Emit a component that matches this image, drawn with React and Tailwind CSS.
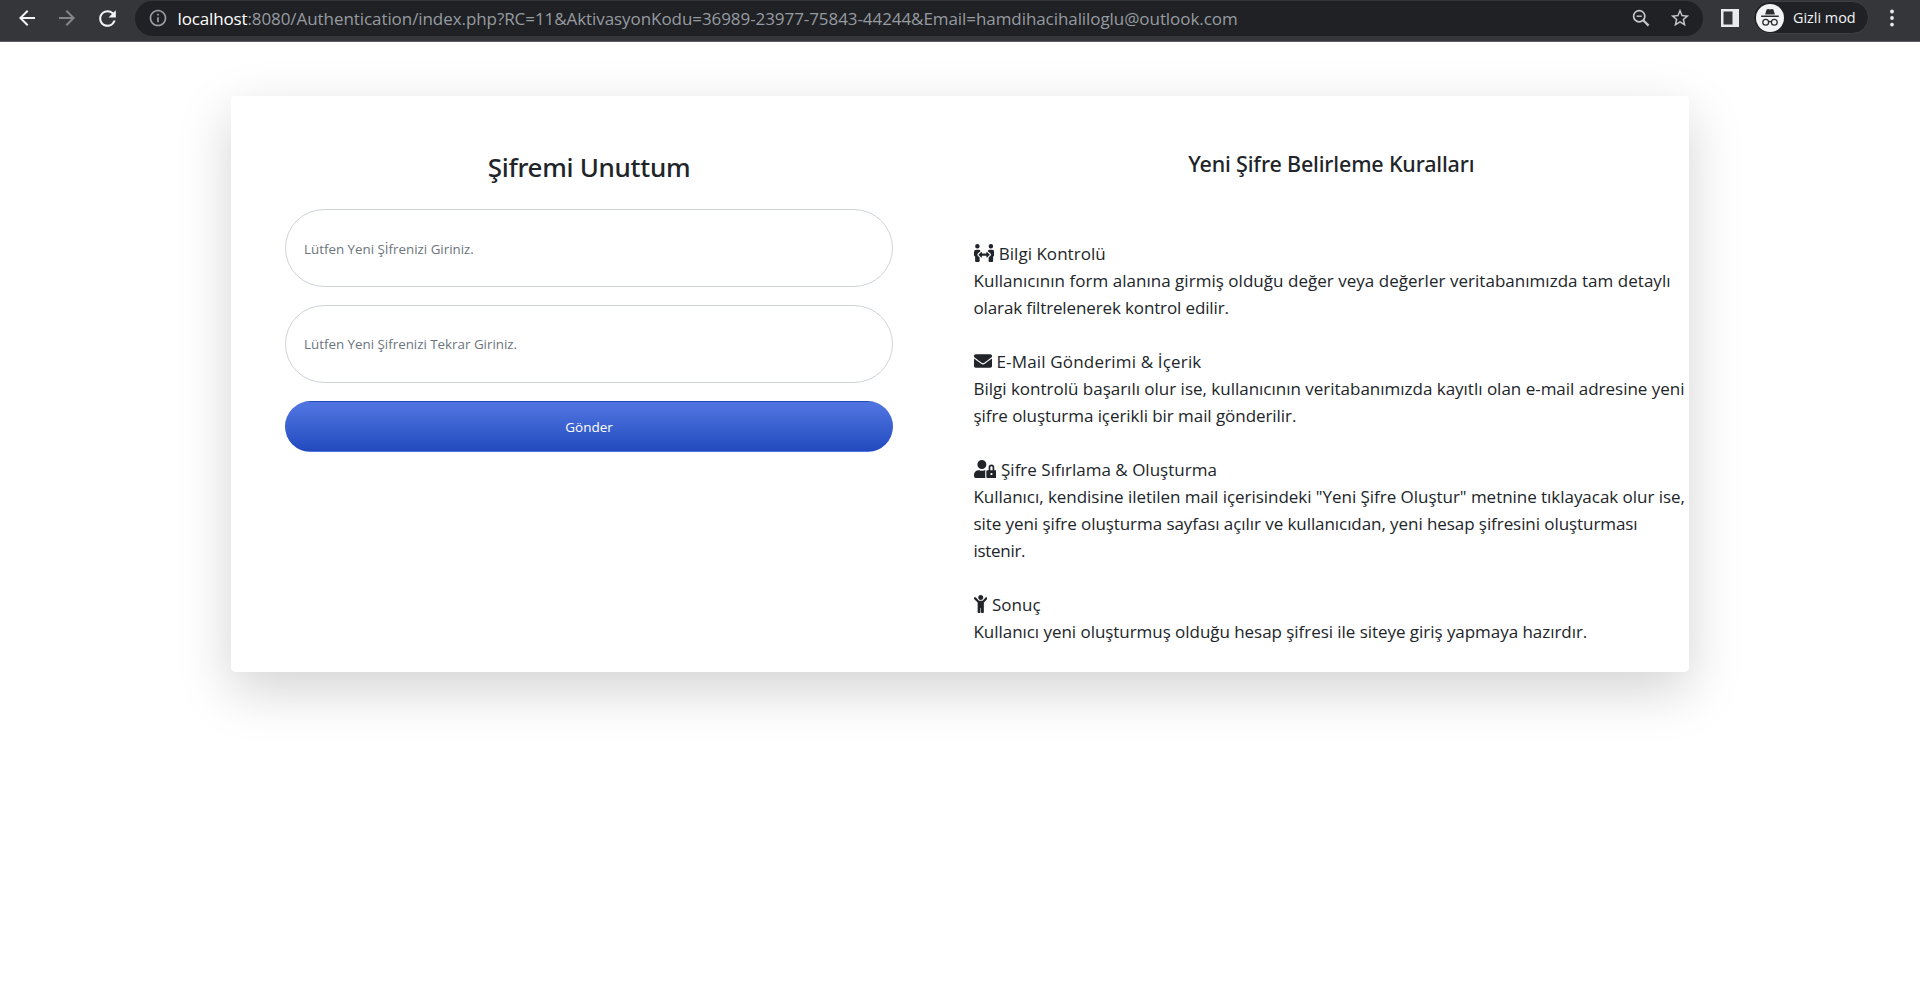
import React from "react";
import {
  MdArrowBack,
  MdArrowForward,
  MdRefresh,
  MdInfoOutline,
  MdStarBorder,
} from "react-icons/md";
import { FaPeopleArrows, FaEnvelope, FaUserLock, FaChild } from "react-icons/fa";

function IncognitoIcon() {
  return (
    <svg className="h-7 w-7 shrink-0" viewBox="0 0 28 28">
      <circle cx="14" cy="14" r="14" fill="#f1f3f4" />
      <path
        d="M10.6 5.4 12.2 5l1.8.5 1.8-.5 1.6.4 1.5 5.2H9.1zM5.2 11.6h17.6v1.3H5.2z"
        fill="#2b2c30"
      />
      <g fill="none" stroke="#2b2c30" strokeWidth="1.3">
        <circle cx="9.7" cy="18.3" r="2.9" />
        <circle cx="18.3" cy="18.3" r="2.9" />
        <path d="M12.6 17.9q1.4-.9 2.8 0" />
      </g>
    </svg>
  );
}

function ZoomOutIcon() {
  return (
    <svg
      className="mt-[8px] mr-[19px] h-[18px] w-[18px] shrink-0 text-[#c4c7cb]"
      viewBox="0 0 18 18"
      fill="none"
      stroke="currentColor"
    >
      <circle cx="7.2" cy="7.2" r="5.6" strokeWidth="1.7" />
      <path d="m11.2 11.2 5.4 5.4" strokeWidth="2.2" />
      <path d="M4.6 7.2h5.2" strokeWidth="1.4" />
    </svg>
  );
}

function BrowserBar() {
  return (
    <header className="flex h-[42px] w-full items-start border-b border-[#5b5d61] bg-[#35363a] pt-px text-[#e8eaed]">
      <div className="flex w-[135px] gap-4 pt-[5px] pl-[15px]">
        <MdArrowBack className="h-6 w-6 text-[#f1f3f4]" />
        <MdArrowForward className="h-6 w-6 text-[#85868a]" />
        <MdRefresh className="h-[25px] w-[25px] text-[#f1f3f4]" />
      </div>
      <div className="flex h-[35px] w-[1568px] items-start rounded-full bg-[#202124] pl-[13px]">
        <MdInfoOutline className="mt-[7px] h-5 w-5 shrink-0 text-[#9aa0a6]" />
        <div className="ml-[9.5px] flex-1 font-['Open_Sans',sans-serif] text-[17px] leading-[35px] tracking-[-0.07px] whitespace-nowrap text-[#969ba1]">
          <span className="tracking-[-0.15px] text-white">localhost</span>
          :8080/Authentication/index.php?RC=11&amp;AktivasyonKodu=36989-23977-75843-44244&amp;Email=hamdihacihaliloglu@outlook.com
        </div>
        <ZoomOutIcon />
        <MdStarBorder className="mt-[6px] mr-[12px] h-[22px] w-[22px] text-[#c4c7cb]" />
      </div>
      <svg className="mt-2 ml-[18px] h-[18px] w-[18px] shrink-0" viewBox="0 0 18 18">
        <path d="M0 0h18v18H0zM2.5 2.5v13h9v-13z" fill="#e8eaed" fillRule="evenodd" />
      </svg>
      <div className="ml-[14px] flex h-[33px] w-[116px] items-start rounded-full border border-[#3f4044] bg-[#202124] pt-[2px] pl-[2px]">
        <IncognitoIcon />
        <span className="ml-[9px] font-['Open_Sans',sans-serif] text-[14.4px] leading-7 whitespace-nowrap text-[#f1f3f4]">
          Gizli mod
        </span>
      </div>
      <svg className="mt-[8px] ml-[21px] h-5 w-1 shrink-0" viewBox="0 0 4 20" fill="#e8eaed">
        <circle cx="2" cy="2.5" r="1.9" />
        <circle cx="2" cy="9" r="1.9" />
        <circle cx="2" cy="15.6" r="1.9" />
      </svg>
    </header>
  );
}

const rules = [
  {
    icon: FaPeopleArrows,
    iconClass: "w-[20.25px]",
    title: ["Bilgi Kontrolü", "tracking-[0.03px]"],
    lines: [
      ["Kullanıcının form alanına girmiş olduğu değer veya değerler veritabanımızda tam detaylı", "tracking-[0.03px]"],
      ["olarak filtrelenerek kontrol edilir.", "tracking-[-0.13px]"],
    ],
  },
  {
    icon: FaEnvelope,
    iconClass: "w-[18px]",
    title: ["E-Mail Gönderimi & İçerik", "tracking-[0.17px]"],
    lines: [
      ["Bilgi kontrolü başarılı olur ise, kullanıcının veritabanımızda kayıtlı olan e-mail adresine yeni", "tracking-[-0.01px]"],
      ["şifre oluşturma içerikli bir mail gönderilir.", "tracking-[-0.06px]"],
    ],
  },
  {
    icon: FaUserLock,
    iconClass: "w-[22.5px]",
    title: ["Şifre Sıfırlama & Oluşturma", "tracking-[0.01px]"],
    lines: [
      ["Kullanıcı, kendisine iletilen mail içerisindeki \"Yeni Şifre Oluştur\" metnine tıklayacak olur ise,", "tracking-[-0.038px]"],
      ["site yeni şifre oluşturma sayfası açılır ve kullanıcıdan, yeni hesap şifresini oluşturması", "tracking-[-0.07px]"],
      ["istenir.", "tracking-[-0.3px]"],
    ],
  },
  {
    icon: FaChild,
    iconClass: "w-[13.5px]",
    title: ["Sonuç", ""],
    lines: [
      ["Kullanıcı yeni oluşturmuş olduğu hesap şifresi ile siteye giriş yapmaya hazırdır.", "tracking-[-0.045px]"],
    ],
  },
];

function Rule({ rule }) {
  const Icon = rule.icon;
  return (
    <div className="whitespace-nowrap">
      <div className="flex h-[27px] gap-[5px]">
        <Icon className={`mt-[4px] h-[18px] shrink-0 ${rule.iconClass}`} />
        <span className={rule.title[1]}>{rule.title[0]}</span>
      </div>
      {rule.lines.map(([text, tracking]) => (
        <div key={text} className="h-[27px]">
          <span className={tracking}>{text}</span>
        </div>
      ))}
    </div>
  );
}

const inputClass =
  "block h-[78px] w-full rounded-full border border-[#ced4da] bg-white px-[18px] text-[13.35px] text-[#6e707e] outline-none placeholder:text-[#6c757d] placeholder:opacity-100";

export default function App() {
  return (
    <div className="flex h-[993px] w-full flex-col overflow-hidden bg-white font-['Open_Sans','Noto_Sans',sans-serif] text-[#212529]">
      <BrowserBar />
      <main className="mx-auto mt-[54px] flex h-[576px] w-[1458px] rounded-[4.5px] bg-white shadow-[0_18px_54px_rgba(0,0,0,0.175)]">
        <section className="w-[729px] pt-[54px] pr-[67px] pl-[54px]">
          <h1 className="text-center font-['Noto_Sans',sans-serif] text-[26px] leading-[34px] font-medium tracking-[-0.3px]">
            Şifremi Unuttum
          </h1>
          <form className="mt-[25px] flex flex-col gap-[18px]">
            <input className={`${inputClass} pt-[2px]`} placeholder="Lütfen Yeni Şİfrenizi Giriniz." />
            <input className={inputClass} placeholder="Lütfen Yeni Şifrenizi Tekrar Giriniz." />
            <button
              type="button"
              className="h-[51px] w-full rounded-full border border-transparent bg-[linear-gradient(180deg,#4e73df_10%,#224abe_100%)] pt-[2px] text-[13.5px] text-white"
            >
              Gönder
            </button>
          </form>
        </section>
        <section className="flex-1 pt-[54px] pl-[13.5px]">
          <h2 className="text-center font-['Noto_Sans',sans-serif] text-[21.5px] leading-7 font-medium tracking-[-0.16px]">
            Yeni Şifre Belirleme Kuralları
          </h2>
          <div className="mt-[62px] flex flex-col gap-[27px] text-[17px] leading-[27px]">
            {rules.map((rule) => (
              <Rule key={rule.title[0]} rule={rule} />
            ))}
          </div>
        </section>
      </main>
    </div>
  );
}
